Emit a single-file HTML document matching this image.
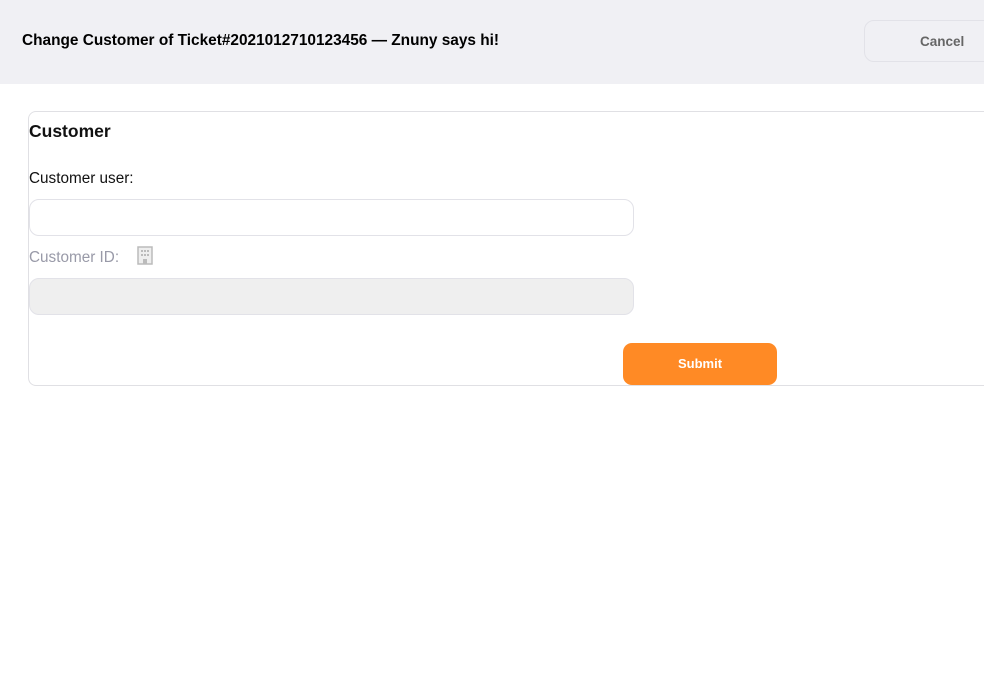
<!DOCTYPE html>
<html><head><style>
body{margin:0;width:984px;height:698px;overflow:hidden;background:#fff;font-family:"Liberation Sans",Arial,sans-serif;position:relative}
.hdr{position:absolute;left:0;top:0;width:984px;height:84px;background:#f0f0f4}
.title{position:absolute;left:22px;top:32px;font-size:15.4px;font-weight:bold;color:#000}
.cancel{position:absolute;left:864px;top:20px;width:140px;height:42px;border:1px solid #e2e2e8;border-radius:10px;box-sizing:border-box}
.cancel span{position:absolute;left:55px;top:13px;font-size:13.5px;font-weight:bold;color:#666}
.box{position:absolute;left:28px;top:111px;width:980px;height:275px;border:1px solid #e0e0e4;border-radius:8px;box-sizing:border-box}
.h{position:absolute;left:29px;top:121px;font-size:17.5px;font-weight:bold;color:#111}
.l1{position:absolute;left:29px;top:170px;font-size:15.3px;color:#111}
.in1{position:absolute;left:29px;top:199px;width:605px;height:37px;border:1px solid #e2e2e8;border-radius:10px;box-sizing:border-box}
.l2{position:absolute;left:29px;top:249px;font-size:15.3px;color:#999aa8}
.in2{position:absolute;left:29px;top:278px;width:605px;height:37px;border:1px solid #e2e2e8;border-radius:10px;box-sizing:border-box;background:#efefef}
.sub{position:absolute;left:623px;top:343px;width:154px;height:42px;background:#ff8a25;border-radius:9px;color:#fff;font-size:13px;font-weight:bold;text-align:center;line-height:41px}
</style></head><body>
<div class="hdr"><div class="title">Change Customer of Ticket#2021012710123456 — Znuny says hi!</div>
<div class="cancel"><span>Cancel</span></div></div>
<div class="box"></div>
<div class="h">Customer</div>
<div class="l1">Customer user:</div>
<div class="in1"></div>
<div class="l2">Customer ID:</div>
<svg style="position:absolute;left:137px;top:246px" width="16" height="19" viewBox="0 0 16 19"><rect x="1" y="1" width="14" height="17" fill="#eee" stroke="#bbb" stroke-width="1.5"/><g fill="#bbb"><rect x="4" y="4" width="2" height="2"/><rect x="7" y="4" width="2" height="2"/><rect x="10" y="4" width="2" height="2"/><rect x="4" y="8" width="2" height="2"/><rect x="7" y="8" width="2" height="2"/><rect x="10" y="8" width="2" height="2"/><rect x="6" y="13" width="4" height="5"/></g></svg>
<div class="in2"></div>
<div class="sub">Submit</div>
</body></html>
